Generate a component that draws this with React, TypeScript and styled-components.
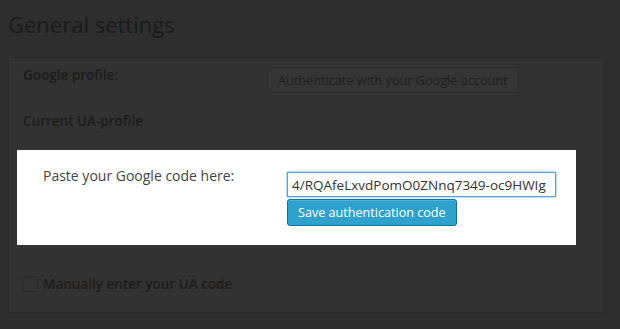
import React from 'react';
import styled, { createGlobalStyle } from 'styled-components';

const GlobalStyle = createGlobalStyle`
  html, body {
    margin: 0;
    padding: 0;
    background: #2e2e2e;
  }
  body {
    font-family: "Open Sans", "Liberation Sans", sans-serif;
    color: #1c1c1c;
  }
`;

const Page = styled.div`
  width: 620px;
  height: 329px;
  padding: 10px 15px 0 8px;
  box-sizing: border-box;
  overflow: hidden;
`;

const Title = styled.h2`
  margin: 0 0 18px 0;
  font-size: 22px;
  font-weight: 400;
  line-height: 29px;
  color: #1b1b1b;
`;

const Panel = styled.div`
  border: 1px solid #2a2a2a;
  background: #323232;
  padding: 7px 0 18px 0;
`;

const Row = styled.div`
  display: flex;
  align-items: flex-start;
  padding-left: 14px;
`;

const Label = styled.div<{ $width?: number }>`
  width: ${(p) => (p.$width ? `${p.$width}px` : 'auto')};
  font-size: 13.5px;
  font-weight: 600;
  line-height: 20px;
  color: #1c1c1c;
`;

const SectionLabel = styled(Label)`
  margin: 18px 0 0 14px;
`;

const GhostButton = styled.button`
  margin-top: 2px;
  height: 26px;
  padding: 0 10px;
  border: 1px solid #2a2a2a;
  border-radius: 3px;
  background: #353535;
  font-family: inherit;
  font-size: 12.7px;
  color: #1e1e1e;
  line-height: 24px;
`;

const Highlight = styled.div`
  margin: 19px 28px 0 8px;
  background: #ffffff;
  padding: 16px 0 19px 26px;
  display: flex;
  align-items: flex-start;
`;

const FocusLabel = styled.div`
  width: 244px;
  font-size: 14px;
  font-weight: 400;
  line-height: 20px;
  color: #444444;
`;

const Field = styled.div`
  display: flex;
  flex-direction: column;
  align-items: flex-start;
  gap: 2px;
  padding-top: 6px;
`;

const CodeInput = styled.input`
  width: 269px;
  height: 25px;
  box-sizing: border-box;
  border: 1px solid #5b9dd9;
  box-shadow: 0 0 2px rgba(30, 140, 190, 0.8);
  padding: 0 4px;
  font-family: inherit;
  font-size: 13.5px;
  color: #333;
  outline: none;
`;

const PrimaryButton = styled.button`
  height: 27px;
  padding: 0 10px;
  border: 1px solid #0074a2;
  border-radius: 3px;
  background: #2ea2cc;
  box-shadow: inset 0 1px 0 rgba(120, 200, 230, 0.5);
  color: #ffffff;
  font-family: inherit;
  font-size: 12.6px;
  line-height: 25px;
`;

const CheckRow = styled.label`
  display: flex;
  align-items: center;
  gap: 5px;
  margin: 29px 0 0 13px;
  font-size: 13.5px;
  font-weight: 600;
  line-height: 20px;
  color: #1c1c1c;
`;

const Box = styled.span`
  width: 16px;
  height: 16px;
  box-sizing: border-box;
  border: 1px solid #2a2a2a;
  background: #333333;
  box-shadow: inset 0 1px 2px rgba(0, 0, 0, 0.1);
`;

export default function App() {
  return (
    <>
      <GlobalStyle />
      <Page>
        <Title>General settings</Title>
        <Panel>
          <Row>
            <Label $width={244}>Google profile:</Label>
            <GhostButton>Authenticate with your Google account</GhostButton>
          </Row>
          <SectionLabel>Current UA-profile</SectionLabel>
          <Highlight>
            <FocusLabel>Paste your Google code here:</FocusLabel>
            <Field>
              <CodeInput readOnly value="4/RQAfeLxvdPomO0ZNnq7349-oc9HWIg" />
              <PrimaryButton>Save authentication code</PrimaryButton>
            </Field>
          </Highlight>
          <CheckRow>
            <Box />
            Manually enter your UA code
          </CheckRow>
        </Panel>
      </Page>
    </>
  );
}
